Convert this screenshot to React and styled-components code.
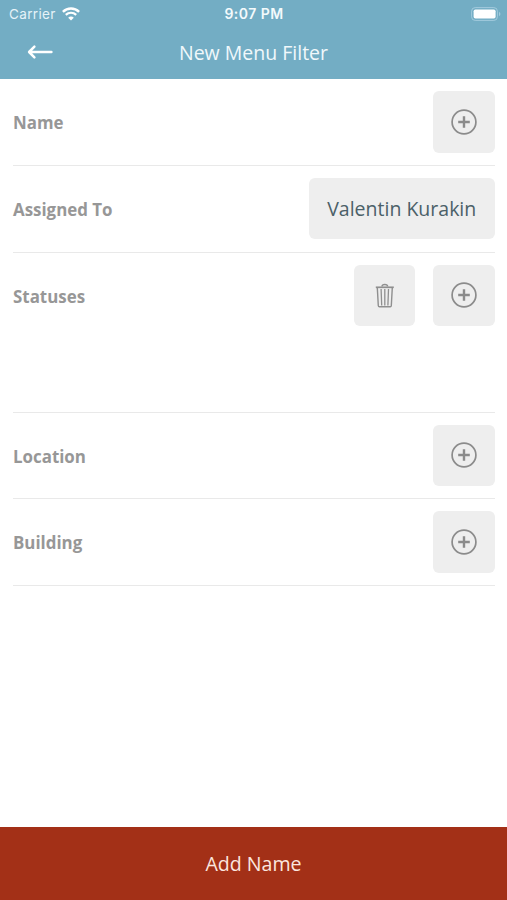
import React from "react";
import styled, { createGlobalStyle } from "styled-components";

const filters = [
  { name: "Name" },
  { name: "Assigned To", value: "Valentin Kurakin" },
  { name: "Statuses", removable: true, tall: true },
  { name: "Location" },
  { name: "Building" },
];

const PlusIcon = () => (
  <svg width="28" height="28" viewBox="0 0 28 28" fill="none" stroke="#8b8b8b">
    <circle cx="14" cy="14" r="11.9" strokeWidth="1.7" />
    <path d="M14 8.2v11.6M8.2 14h11.6" strokeWidth="2.4" />
  </svg>
);

const TrashIcon = () => (
  <svg width="20" height="28" viewBox="0 0 20 28" fill="none" stroke="#8f8f8f">
    <path d="M.8 6.3h18" strokeWidth="1.7" />
    <path d="M7 5.6c0-2.8 5.6-2.8 5.6 0" strokeWidth="1.4" />
    <path d="M2.3 6.6l1 18.2q.1 1 1.1 1h10.8q1 0 1.1-1l1-18.2" strokeWidth="1.4" />
    <path d="M6.1 8l.6 16.4M9.8 8v16.4M13.5 8l-.6 16.4" strokeWidth="1.3" />
  </svg>
);

const WifiIcon = () => (
  <svg width="18" height="14" viewBox="0 0 18 14" fill="none" stroke="#fff">
    <path d="M.9 4.9c4.6-4.5 11.6-4.5 16.2 0" strokeWidth="2.4" />
    <path d="M3.8 7.9c3-2.9 7.4-2.9 10.4 0" strokeWidth="2.2" />
    <path d="M9 13.6l-2.8-2.9c1.6-1.5 4-1.5 5.6 0z" fill="#fff" stroke="none" />
  </svg>
);

const BatteryIcon = () => (
  <svg width="30" height="14" viewBox="0 0 30 14">
    <rect x=".6" y=".6" width="25.8" height="12.8" rx="3.6" fill="none" stroke="#a3cbdd" />
    <rect x="2.6" y="2.4" width="22" height="9.2" rx="1.8" fill="#fff" />
    <path d="M28 4.8c1.9.8 1.9 3.6 0 4.4z" fill="#a3cbdd" />
  </svg>
);

const BackIcon = () => (
  <svg width="26" height="16" viewBox="0 0 26 16" fill="none" stroke="#fff">
    <path
      d="M24.4 8H2.3M7.4 2.7L2.1 8L7.4 13.3"
      strokeWidth="2.5"
      strokeLinecap="round"
      strokeLinejoin="round"
    />
  </svg>
);

const App = () => {
  return (
    <Screen>
      <GlobalStyle />
      <Header>
        <StatusBar>
          <Carrier>
            Carrier
            <WifiIcon />
          </Carrier>
          <Clock>9:07 PM</Clock>
          <Battery>
            <BatteryIcon />
          </Battery>
        </StatusBar>
        <NavBar>
          <BackButton aria-label="Back">
            <BackIcon />
          </BackButton>
          <Title>New Menu Filter</Title>
        </NavBar>
      </Header>
      <FilterList>
        {filters.map(({ name, value, removable, tall }) => (
          <FilterRow key={name} $tall={tall}>
            <FilterName>{name}</FilterName>
            <Actions>
              {removable && (
                <ActionButton aria-label={`Clear ${name}`}>
                  <TrashIcon />
                </ActionButton>
              )}
              <ActionButton $wide={!!value} aria-label={value || `Add ${name}`}>
                {value || <PlusIcon />}
              </ActionButton>
            </Actions>
          </FilterRow>
        ))}
      </FilterList>
      <SubmitButton>Add Name</SubmitButton>
    </Screen>
  );
};

const GlobalStyle = createGlobalStyle`
  * {
    box-sizing: border-box;
  }
  body {
    margin: 0;
    background: #fff;
    font-family: "Open Sans", sans-serif;
  }
  button {
    border: 0;
    padding: 0;
    font-family: inherit;
    cursor: pointer;
  }
  svg {
    display: block;
  }
`;

const Screen = styled.div`
  display: flex;
  flex-direction: column;
  height: 100vh;
`;

const Header = styled.header`
  height: 79.4px;
  background: #73adc4;
  color: #fff;
`;

const StatusBar = styled.div`
  display: grid;
  grid-template-columns: 1fr auto 1fr;
  align-items: center;
  height: 27px;
  padding: 0 6px 0 9px;
  font-family: Inter, sans-serif;
  font-size: 13.5px;
`;

const Carrier = styled.span`
  display: flex;
  align-items: center;
  gap: 6px;
  color: #e6f3f8;
  letter-spacing: 0.35px;
`;

const Clock = styled.span`
  font-size: 14px;
  font-weight: 600;
  letter-spacing: 0.45px;
  margin-right: 2px;
  color: #f3fafc;
`;

const Battery = styled.span`
  justify-self: end;
`;

const NavBar = styled.div`
  display: grid;
  grid-template-columns: 80px 1fr 80px;
  align-items: center;
  height: 50px;
`;

const BackButton = styled.button`
  display: flex;
  justify-content: center;
  background: none;
`;

const Title = styled.h1`
  margin: 0;
  text-align: center;
  font-size: 19.5px;
  font-weight: 400;
  color: #f0f8fb;
`;

const FilterList = styled.main`
  flex: 1;
  padding: 0 12.5px 0 13px;
`;

const FilterRow = styled.section`
  display: flex;
  justify-content: space-between;
  align-items: flex-start;
  height: ${({ $tall }) => ($tall ? "160px" : "86.6px")};
  padding-top: 12.1px;
  border-bottom: 1px solid #e9e9e9;
`;

const FilterName = styled.span`
  line-height: 63px;
  font-size: 16.9px;
  font-weight: 700;
  color: #979797;
`;

const Actions = styled.div`
  display: flex;
  gap: 18px;
`;

const ActionButton = styled.button`
  display: flex;
  align-items: center;
  justify-content: center;
  width: ${({ $wide }) => ($wide ? "185.5px" : "61.3px")};
  height: 61.3px;
  border-radius: 6px;
  background: #eee;
  font-size: 19.5px;
  color: #4b6068;
`;

const SubmitButton = styled.button`
  height: 73.4px;
  background: #a33017;
  font-size: 19.6px;
  color: #fbe6df;
`;

export default App;
